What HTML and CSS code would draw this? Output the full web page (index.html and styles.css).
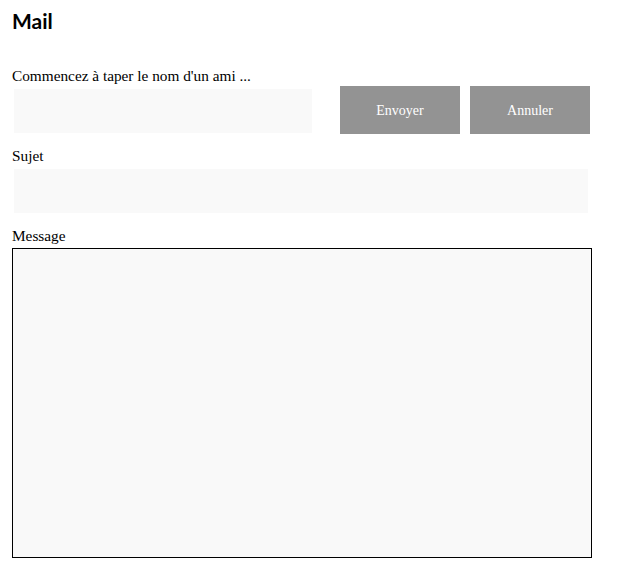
FILE: index.html
```html
<!DOCTYPE html>
<html lang="fr">
<head>
  <meta charset="UTF-8">
  <title>Mail</title>
  <link rel="stylesheet" href="styles.css">
</head>
<body>
  <div class="mail">
    <h1>Mail</h1>

    <!-- destinataire + actions -->
    <label class="label label-to" for="ami">Commencez à taper le nom d'un ami ...</label>
    <div class="row">
      <input type="text" id="ami" class="field field-to">
      <button class="btn btn-first">Envoyer</button>
      <button class="btn">Annuler</button>
    </div>

    <label class="label label-subject" for="sujet">Sujet</label>
    <input type="text" id="sujet" class="field field-subject">

    <label class="label label-msg" for="message">Message</label>
    <textarea id="message" class="message"></textarea>
  </div>
</body>
</html>
```

FILE: styles.css
```css
body {
  margin: 0;
  font-family: "Liberation Serif", serif;
  color: #000;
  background: #fff;
}
.mail {
  padding: 10px 12px 0 12px;
  display: flex;
  flex-direction: column;
  align-items: flex-start;
}
h1 {
  font-family: Lato, sans-serif;
  font-size: 21px;
  font-weight: bold;
  margin: 0;
  line-height: 22px;
}
.label {
  font-size: 15.3px;
  line-height: 18px;
  display: block;
}
.label-to {
  margin-top: 35px;
}
.row {
  display: flex;
  align-items: flex-start;
  margin-top: 1px;
}
.field {
  background: #f9f9f9;
  border: none;
  outline: none;
  height: 44px;
  margin-left: 2px;
  padding: 0 8px;
  box-sizing: border-box;
  font-family: inherit;
  font-size: 15px;
}
.field-to {
  width: 298px;
  margin-top: 3px;
}
.btn {
  width: 120px;
  height: 48px;
  background: #939393;
  color: #fff;
  border: none;
  font-family: "Liberation Serif", serif;
  font-size: 14px;
  padding-top: 2px;
  margin-left: 10px;
  cursor: pointer;
}
.btn-first {
  margin-left: 28px;
}
.label-subject {
  margin-top: 13px;
}
.field-subject {
  width: 574px;
  margin-top: 4px;
}
.label-msg {
  margin-top: 14px;
}
.message {
  width: 580px;
  height: 310px;
  margin-top: 3px;
  box-sizing: border-box;
  border: 1px solid #000;
  background: #f9f9f9;
  resize: none;
  outline: none;
}
```
